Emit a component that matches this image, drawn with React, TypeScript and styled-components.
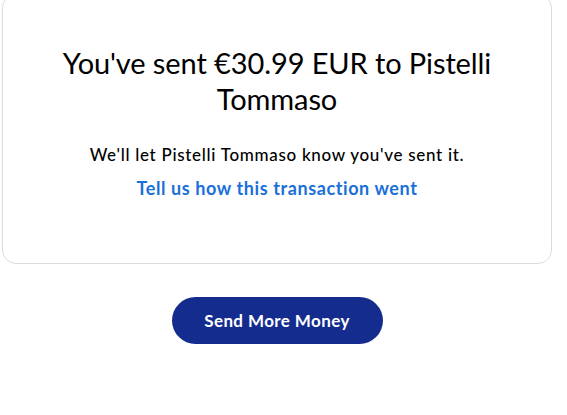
import React from "react";
import styled, { createGlobalStyle } from "styled-components";

const GlobalStyle = createGlobalStyle`
  html, body {
    margin: 0;
    padding: 0;
    background: #ffffff;
    font-family: "Lato", "Open Sans", "Liberation Sans", sans-serif;
    color: #001435;
  }
`;

export default function App() {
  return (
    <>
      <GlobalStyle />
      <S.Page>
        <S.Card>
          <S.Title>You've sent €30.99 EUR to Pistelli Tommaso</S.Title>
          <S.Message>We'll let Pistelli Tommaso know you've sent it.</S.Message>
          <S.FeedbackLink href="#">Tell us how this transaction went</S.FeedbackLink>
        </S.Card>
        <S.Actions>
          <S.PrimaryButton type="button">Send More Money</S.PrimaryButton>
        </S.Actions>
      </S.Page>
    </>
  );
}

const S = {
  Page: styled.div`
    width: 550px;
    margin: -6px 0 0 2px;
    display: flex;
    flex-direction: column;
    align-items: center;
  `,
  Card: styled.section`
    box-sizing: border-box;
    width: 550px;
    height: 270px;
    border: 1px solid #dcdcdc;
    border-radius: 14px;
    padding: 50px 40px 0;
    display: flex;
    flex-direction: column;
    align-items: center;
    text-align: center;
  `,
  Title: styled.h1`
    margin: 0;
    font-size: 29px;
    line-height: 36px;
    font-weight: 400;
    letter-spacing: -0.1px;
    color: #000000;
    max-width: 440px;
  `,
  Message: styled.p`
    margin: 26px 0 0;
    font-size: 17px;
    line-height: 24px;
    font-weight: 500;
    letter-spacing: 0.7px;
    color: #000000;
  `,
  FeedbackLink: styled.a`
    margin-top: 9px;
    font-size: 18px;
    line-height: 24px;
    font-weight: 700;
    letter-spacing: 0.6px;
    color: #1a6fd9;
    text-decoration: none;
  `,
  Actions: styled.div`
    display: flex;
    justify-content: center;
    margin-top: 33px;
  `,
  PrimaryButton: styled.button`
    width: 211px;
    height: 47px;
    border: none;
    border-radius: 24px;
    background-color: #142c8e;
    color: #ffffff;
    font-family: inherit;
    font-size: 17px;
    font-weight: 700;
    letter-spacing: 0.4px;
    cursor: pointer;
  `,
};
